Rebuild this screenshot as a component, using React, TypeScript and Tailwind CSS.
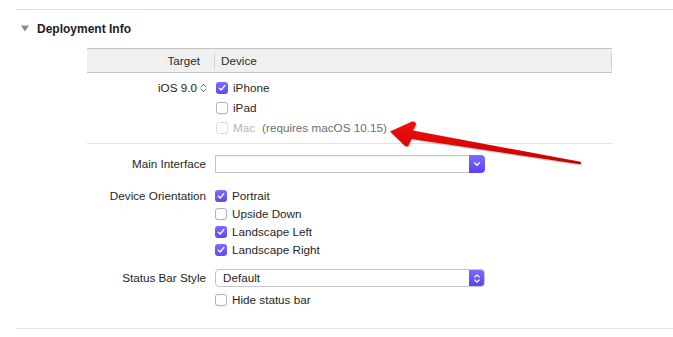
import React from "react";

type Box = { label: string; checked?: boolean; disabled?: boolean; note?: string };

function Check({ checked = false, disabled = false }: { checked?: boolean; disabled?: boolean }) {
  if (checked) {
    return (
      <span className="flex h-[12px] w-[12px] shrink-0 items-center justify-center rounded-[3px] bg-gradient-to-b from-[#7b6dfb] to-[#5d48f2]">
        <svg width="8" height="8" viewBox="0 0 8 8" fill="none">
          <path d="M1.3 4.2 L3.2 6 L6.8 1.6" stroke="white" strokeWidth="1.4" strokeLinecap="round" strokeLinejoin="round" />
        </svg>
      </span>
    );
  }
  return (
    <span
      className={
        disabled
          ? "h-[12px] w-[12px] shrink-0 rounded-[3px] border border-[#dedede] bg-white"
          : "h-[12px] w-[12px] shrink-0 rounded-[3px] border border-[#b3b3b3] bg-white shadow-[0_0.5px_0_rgba(0,0,0,0.08)]"
      }
    />
  );
}

function CheckRow({ label, checked, disabled, note, h = "h-[20px]" }: Box & { h?: string }) {
  return (
    <div className={`flex items-center gap-[5px] ${h}`}>
      <Check checked={checked} disabled={disabled} />
      <span className={disabled ? "text-[#b5b5b5]" : "text-[#262626]"}>{label}</span>
      {note && <span className="ml-[2px] text-[#6e6e6e]">{note}</span>}
    </div>
  );
}

function Label({ children }: { children: React.ReactNode }) {
  return <div className="w-[119px] shrink-0 text-right text-[#262626]">{children}</div>;
}

const orientations: Box[] = [
  { label: "Portrait", checked: true },
  { label: "Upside Down" },
  { label: "Landscape Left", checked: true },
  { label: "Landscape Right", checked: true },
];

export default function App() {
  return (
    <div className="relative h-[337px] w-[673px] overflow-hidden bg-white text-[11.7px] font-['Liberation_Sans',Arial,sans-serif]">
      <div className="pl-4 pt-[9px]">
        <div className="h-[320px] border-y border-[#e2e2e2]">
          <div className="flex h-[38px] items-center pl-[5px]">
            <svg width="8" height="7" viewBox="0 0 8 7" className="mb-[1px]">
              <path d="M0 0.5 H8 L4 6.5 Z" fill="#8c8c8c" />
            </svg>
            <span className="ml-[8px] text-[12px] font-bold text-[#222]">Deployment Info</span>
          </div>

          <div className="ml-[71px] w-[525px]">
            <div className="flex h-[25px] items-center border-y border-[#c4c4c4] bg-[#f0f0f0] text-[#2a2a2a]">
              <div className="w-[127px] pr-[14px] text-right">Target</div>
              <div className="h-[16px] w-px bg-[#d0d0d0]" />
              <div className="flex-1 pl-[6px]">Device</div>
              <div className="h-[16px] w-px bg-[#cfcfcf]" />
            </div>

            <div className="flex border-b border-[#e2e2e2] pb-[5px] pt-[5px]">
              <div className="flex h-[20px] w-[121px] shrink-0 items-center justify-end gap-[3px] pr-[1px] text-[#262626]">
                <span>iOS 9.0</span>
                <svg width="7" height="10" viewBox="0 0 7 10" fill="none">
                  <path d="M1 3.8 L3.5 1.3 L6 3.8 M1 6.2 L3.5 8.7 L6 6.2" stroke="#555" strokeWidth="1" strokeLinecap="round" strokeLinejoin="round" />
                </svg>
              </div>
              <div className="pl-[8px]">
                <CheckRow label="iPhone" checked />
                <CheckRow label="iPad" />
                <CheckRow label="Mac" disabled note="(requires macOS 10.15)" />
              </div>
            </div>
          </div>

          <div className="ml-[71px] mt-[11px] flex flex-col">
            <div className="flex h-[18px] items-center gap-[9px]">
              <Label>Main Interface</Label>
              <div className="flex h-[18px] w-[270px]">
                <div className="flex-1 border border-r-0 border-[#c6c6c6] bg-white shadow-[inset_0_1px_0_rgba(0,0,0,0.04)]" />
                <div className="flex w-[16px] items-center justify-center rounded-r-[4px] bg-gradient-to-b from-[#7a6dfd] to-[#5a3ff3]">
                  <svg width="8" height="6" viewBox="0 0 8 6" fill="none">
                    <path d="M1.5 1.8 L4 4.2 L6.5 1.8" stroke="white" strokeWidth="1.3" strokeLinecap="round" strokeLinejoin="round" />
                  </svg>
                </div>
              </div>
            </div>

            <div className="mt-[14px] flex gap-[9px]">
              <div className="flex h-[18px] items-center">
                <Label>Device Orientation</Label>
              </div>
              <div>
                {orientations.map((o) => (
                  <CheckRow key={o.label} {...o} h="h-[18px]" />
                ))}
              </div>
            </div>

            <div className="mt-[10px] flex h-[18px] items-center gap-[9px]">
              <Label>Status Bar Style</Label>
              <div className="flex h-[18px] w-[270px] overflow-hidden rounded-[4px] border border-[#c6c6c6] bg-white">
                <div className="flex flex-1 items-center pl-[7px] text-[#262626]">Default</div>
                <div className="-my-px -mr-px flex w-[16px] items-center justify-center rounded-r-[4px] bg-gradient-to-b from-[#7a6dfd] to-[#5a3ff3]">
                  <svg width="8" height="11" viewBox="0 0 8 11" fill="none">
                    <path d="M1.8 4 L4 1.8 L6.2 4 M1.8 7 L4 9.2 L6.2 7" stroke="white" strokeWidth="1.2" strokeLinecap="round" strokeLinejoin="round" />
                  </svg>
                </div>
              </div>
            </div>

            <div className="mt-[4px] pl-[128px]">
              <CheckRow label="Hide status bar" h="h-[18px]" />
            </div>
          </div>
        </div>
      </div>

      <svg className="pointer-events-none absolute left-0 top-0" width="673" height="337" viewBox="0 0 673 337">
        <defs>
          <linearGradient id="arrowFill" x1="0" y1="0" x2="0" y2="1">
            <stop offset="0" stopColor="#f01010" />
            <stop offset="1" stopColor="#c80000" />
          </linearGradient>
        </defs>
        <path
          d="M390 131.5 L412 121.5 Q416 121 416 124.5 L413 130.5 L580.5 161.8 Q582 163 580 164.2 L411.5 139 L408.5 145.5 Q406 147.5 404 145 Z"
          fill="rgba(0,0,0,0.18)"
          transform="translate(1 1.5)"
        />
        <path
          d="M390 131.5 L412 121.5 Q416 121 416 124.5 L413 130.5 L580.5 161.8 Q582 163 580 164.2 L411.5 139 L408.5 145.5 Q406 147.5 404 145 Z"
          fill="url(#arrowFill)"
        />
      </svg>
    </div>
  );
}
